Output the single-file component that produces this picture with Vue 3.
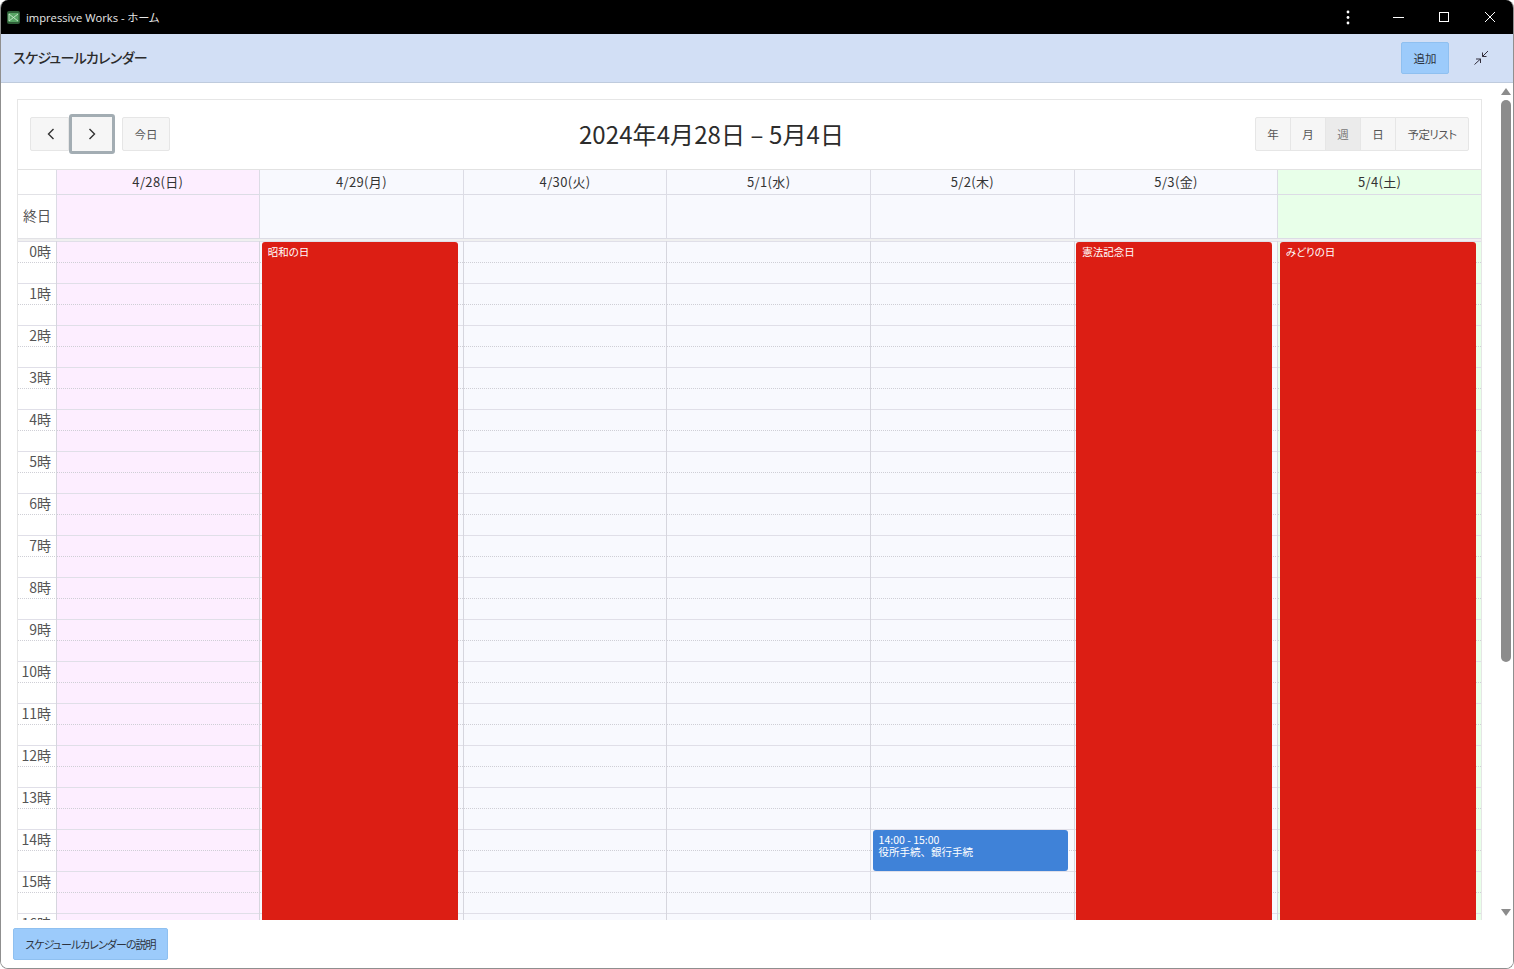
<script setup>
const days = [
  { label: '4/28(日)', tone: 'sun' },
  { label: '4/29(月)', tone: 'week', holiday: '昭和の日' },
  { label: '4/30(火)', tone: 'week' },
  { label: '5/1(水)', tone: 'week' },
  { label: '5/2(木)', tone: 'week', event: { time: '14:00 - 15:00', title: '役所手続、銀行手続' } },
  { label: '5/3(金)', tone: 'week', holiday: '憲法記念日' },
  { label: '5/4(土)', tone: 'sat', holiday: 'みどりの日' }
]
const hours = Array.from({ length: 24 }, (_, i) => i)
const views = ['年', '月', '週', '日', '予定リスト']
</script>

<template>
  <div class="window">
    <div class="titlebar">
      <svg class="app-icon" width="13" height="13" viewBox="0 0 13 13">
        <rect width="13" height="13" rx="2" fill="#2f5f38" />
        <rect x="1.5" y="2" width="10" height="9" fill="#58a565" />
        <path d="M2 3 L6.5 6.5 L2 10 Z M11 3 L6.5 6.5 L11 10" fill="none" stroke="#d5f0d8" stroke-width=".8" />
      </svg>
      <span class="app-name">impressive Works - ホーム</span>
      <div class="win-controls">
        <svg width="46" height="34" viewBox="0 0 46 34"><circle cx="23" cy="12" r="1.4" fill="#fff" /><circle cx="23" cy="17.5" r="1.4" fill="#fff" /><circle cx="23" cy="23" r="1.4" fill="#fff" /></svg>
        <svg width="46" height="34" viewBox="0 0 46 34"><path d="M22 17.5 H33" stroke="#fff" fill="none" /></svg>
        <svg width="46" height="34" viewBox="0 0 46 34"><rect x="22.5" y="12.5" width="9" height="9" stroke="#fff" fill="none" /></svg>
        <svg width="46" height="34" viewBox="0 0 46 34"><path d="M22 12 L32 22 M32 12 L22 22" stroke="#fff" fill="none" /></svg>
      </div>
    </div>

    <header class="appbar">
      <h1 class="page-title">スケジュールカレンダー</h1>
      <button class="btn-blue add">追加</button>
      <svg class="compress" width="16" height="16" viewBox="0 0 16 16">
        <path d="M15 1 L9.5 6.5 M9.5 2.5 V6.5 H13.5 M1.5 14.5 L7.5 9 M3 9 H7.5 V13" fill="none" stroke="#332f3c" stroke-width="1" />
      </svg>
    </header>

    <main class="content">
      <section class="calendar">
        <div class="toolbar">
          <div class="tool-left">
            <div class="nav-group">
              <button class="tool-btn nav">
                <svg width="10" height="14" viewBox="0 0 10 14"><path d="M7.5 2 L2.5 7 L7.5 12" fill="none" stroke="#333" stroke-width="1.4" /></svg>
              </button>
              <button class="tool-btn nav focused">
                <svg width="10" height="14" viewBox="0 0 10 14"><path d="M2.5 2 L7.5 7 L2.5 12" fill="none" stroke="#333" stroke-width="1.4" /></svg>
              </button>
            </div>
            <button class="tool-btn today">今日</button>
          </div>
          <h2 class="range">2024年4月28日 – 5月4日</h2>
          <div class="view-group">
            <button v-for="v in views" :key="v" class="tool-btn view" :class="{ active: v === '週' }">{{ v }}</button>
          </div>
        </div>

        <div class="grid-row head-row">
          <div class="axis-cell"></div>
          <div v-for="d in days" :key="d.label" class="head-cell" :class="d.tone">{{ d.label }}</div>
        </div>
        <div class="grid-row allday-row">
          <div class="axis-cell allday-label">終日</div>
          <div v-for="d in days" :key="d.label" class="allday-cell" :class="d.tone"></div>
        </div>
        <div class="band"></div>

        <div class="grid-row time-grid">
          <div class="axis-col">
            <div v-for="h in hours" :key="h" class="slot axis-slot"><span>{{ h }}時</span></div>
          </div>
          <div v-for="d in days" :key="d.label" class="day-col" :class="d.tone">
            <div v-for="h in hours" :key="h" class="slot"></div>
            <div v-if="d.holiday" class="event holiday">{{ d.holiday }}</div>
            <div v-if="d.event" class="event timed">
              <div>{{ d.event.time }}</div>
              <div>{{ d.event.title }}</div>
            </div>
          </div>
        </div>
      </section>

      <div class="scrollbar">
        <div class="arrow up"></div>
        <div class="thumb"></div>
        <div class="arrow down"></div>
      </div>
    </main>

    <footer class="footer">
      <button class="btn-blue help">スケジュールカレンダーの説明</button>
    </footer>
  </div>
</template>

<style>
html, body { margin: 0; background: #fff; }
</style>

<style scoped>
* { box-sizing: border-box; }
.window {
  width: 1514px;
  height: 969px;
  display: flex;
  flex-direction: column;
  overflow: hidden;
  border-radius: 8px;
  border: 1px solid #8f8f8f;
  border-top: 0;
  background: #fff;
  font-family: "Noto Sans CJK JP", "Open Sans", sans-serif;
  font-feature-settings: "palt";
  color: #333;
}
.titlebar {
  height: 34px;
  flex: none;
  background: #000;
  color: #fff;
  display: flex;
  align-items: center;
  padding-left: 7px;
  margin: 0 -1px;
}
.app-icon { flex: none; }
.app-name {
  margin-left: 6px;
  font-family: "Open Sans", "Noto Sans CJK JP", sans-serif;
  font-size: 11.2px;
  color: #e8e8e8;
}
.win-controls { margin-left: auto; display: flex; margin-right: 5px; }
.win-controls svg { display: block; }
.appbar {
  height: 49px;
  flex: none;
  background: #d2dff5;
  border-bottom: 1px solid #bfcbdd;
  display: flex;
  align-items: center;
  padding: 0 24px 0 12px;
}
.page-title {
  margin: -3px 0 0;
  font-size: 14px;
  letter-spacing: -.65px;
  font-weight: 500;
  color: #2b2b2b;
  white-space: nowrap;
}
.btn-blue {
  background: #9ccbfb;
  border: 1px solid #8fc0f0;
  border-radius: 2px;
  color: #2d3440;
  font: inherit;
  font-size: 11.5px;
  padding: 0;
  white-space: nowrap;
}
.add { margin-left: auto; width: 48px; height: 32px; }
.compress { margin-left: 24px; }
.content {
  position: relative;
  flex: 1;
  min-height: 0;
  padding: 16px 31px 0 16px;
  overflow: hidden;
}
.calendar {
  height: 100%;
  border: 1px solid #e6e6e6;
  border-bottom: 0;
  overflow: hidden;
  display: flex;
  flex-direction: column;
}
.toolbar {
  height: 69px;
  flex: none;
  position: relative;
  display: flex;
  align-items: center;
  justify-content: space-between;
  padding: 0 12px 1px 12px;
}
.tool-left { display: flex; gap: 7px; align-items: center; }
.nav-group { display: flex; }
.tool-btn {
  height: 34px;
  background: #f6f6f6;
  border: 1px solid #e6e6e6;
  font: inherit;
  font-size: 11.5px;
  color: #555;
  padding: 0;
  border-radius: 2px;
  display: flex;
  align-items: center;
  justify-content: center;
  white-space: nowrap;
}
.nav { width: 40px; }
.nav:first-child { width: 39px; border-radius: 2px 0 0 2px; padding-left: 3px; }
.focused {
  width: 46px;
  height: 40px;
  margin: -3px 0 -3px 0;
  border: 3px solid #a3adb3;
  position: relative;
  border-radius: 3px;
}
.today { width: 48px; }
.range {
  position: absolute;
  left: 0;
  right: 76px;
  top: 0;
  height: 67px;
  margin: 0;
  text-align: center;
  font-size: 24px;
  line-height: 67px;
  font-weight: 400;
  color: #2c2c2c;
  letter-spacing: .1px;
  font-feature-settings: normal;
  pointer-events: none;
}
.view-group { display: flex; }
.view { width: 36px; border-radius: 0; margin-left: -1px; }
.view:first-child { border-radius: 2px 0 0 2px; margin-left: 0; }
.view:last-child { width: 74px; border-radius: 0 2px 2px 0; letter-spacing: -.5px; }
.view.active { background: #ebebeb; color: #777; }
.grid-row {
  display: grid;
  grid-template-columns: 37.5px repeat(7, 1fr);
  flex: none;
}
.head-row { height: 26px; border-top: 1px solid #e2e2e2; }
.head-cell {
  border-left: 1px solid #dcdce5;
  border-bottom: 1px solid #dcdce5;
  text-align: center;
  font-size: 13px;
  letter-spacing: .35px;
  line-height: 24px;
  color: #333;
}
.axis-cell { border-bottom: 1px solid #e2e2e6; }
.allday-row { height: 44px; }
.allday-cell { border-left: 1px solid #dcdce5; border-bottom: 1px solid #dcdce5; }
.allday-label {
  font-size: 14px;
  line-height: 40px;
  text-align: right;
  padding-right: 4.5px;
  color: #555;
}
.band { height: 2px; flex: none; background: #f0f0f0; }
.time-grid { flex: none; }
.sun { background: #fdeeff; }
.week { background: #f8f9fe; }
.sat { background: #e8ffe9; }
.day-col { position: relative; border-left: 1px solid #d6d6de; }
.slot {
  height: 42px;
  background-image: repeating-linear-gradient(to right, #cfcfd6 0 1px, transparent 1px 2px);
  background-size: 100% 1px;
  background-position: 0 20px;
  background-repeat: no-repeat;
  border-top: 1px solid #e0dfe8;
}
.axis-slot {
  font-size: 14px;
  line-height: 18px;
  text-align: right;
  padding-right: 4.5px;
  color: #555;
}
.event {
  position: absolute;
  left: 1.5px;
  right: 5px;
  border-radius: 3px;
  color: #fff;
  font-size: 10.5px;
  line-height: 12px;
  padding: 4px 6px;
}
.holiday { top: 1px; bottom: 4px; background: #dc1e14; }
.timed {
  top: 589px;
  height: 41px;
  right: 5.5px;
  background: #3f82d8;
  font-feature-settings: normal;
}
.scrollbar {
  position: absolute;
  top: 0;
  bottom: 0;
  right: 2px;
  width: 10px;
  display: flex;
  flex-direction: column;
  align-items: center;
}
.thumb {
  width: 10px;
  height: 562px;
  margin-top: 5px;
  background: #8c8c8c;
  border-radius: 5px;
}
.arrow { width: 0; height: 0; border-left: 5px solid transparent; border-right: 5px solid transparent; }
.arrow.up { margin-top: 5px; border-bottom: 7px solid #8c8c8c; }
.arrow.down { margin-top: auto; margin-bottom: 4px; border-top: 7px solid #8c8c8c; }
.footer {
  height: 48px;
  flex: none;
  background: #fff;
  padding: 8px 12px;
}
.help { width: 155px; height: 32px; font-size: 11px; letter-spacing: -.93px; }
</style>
